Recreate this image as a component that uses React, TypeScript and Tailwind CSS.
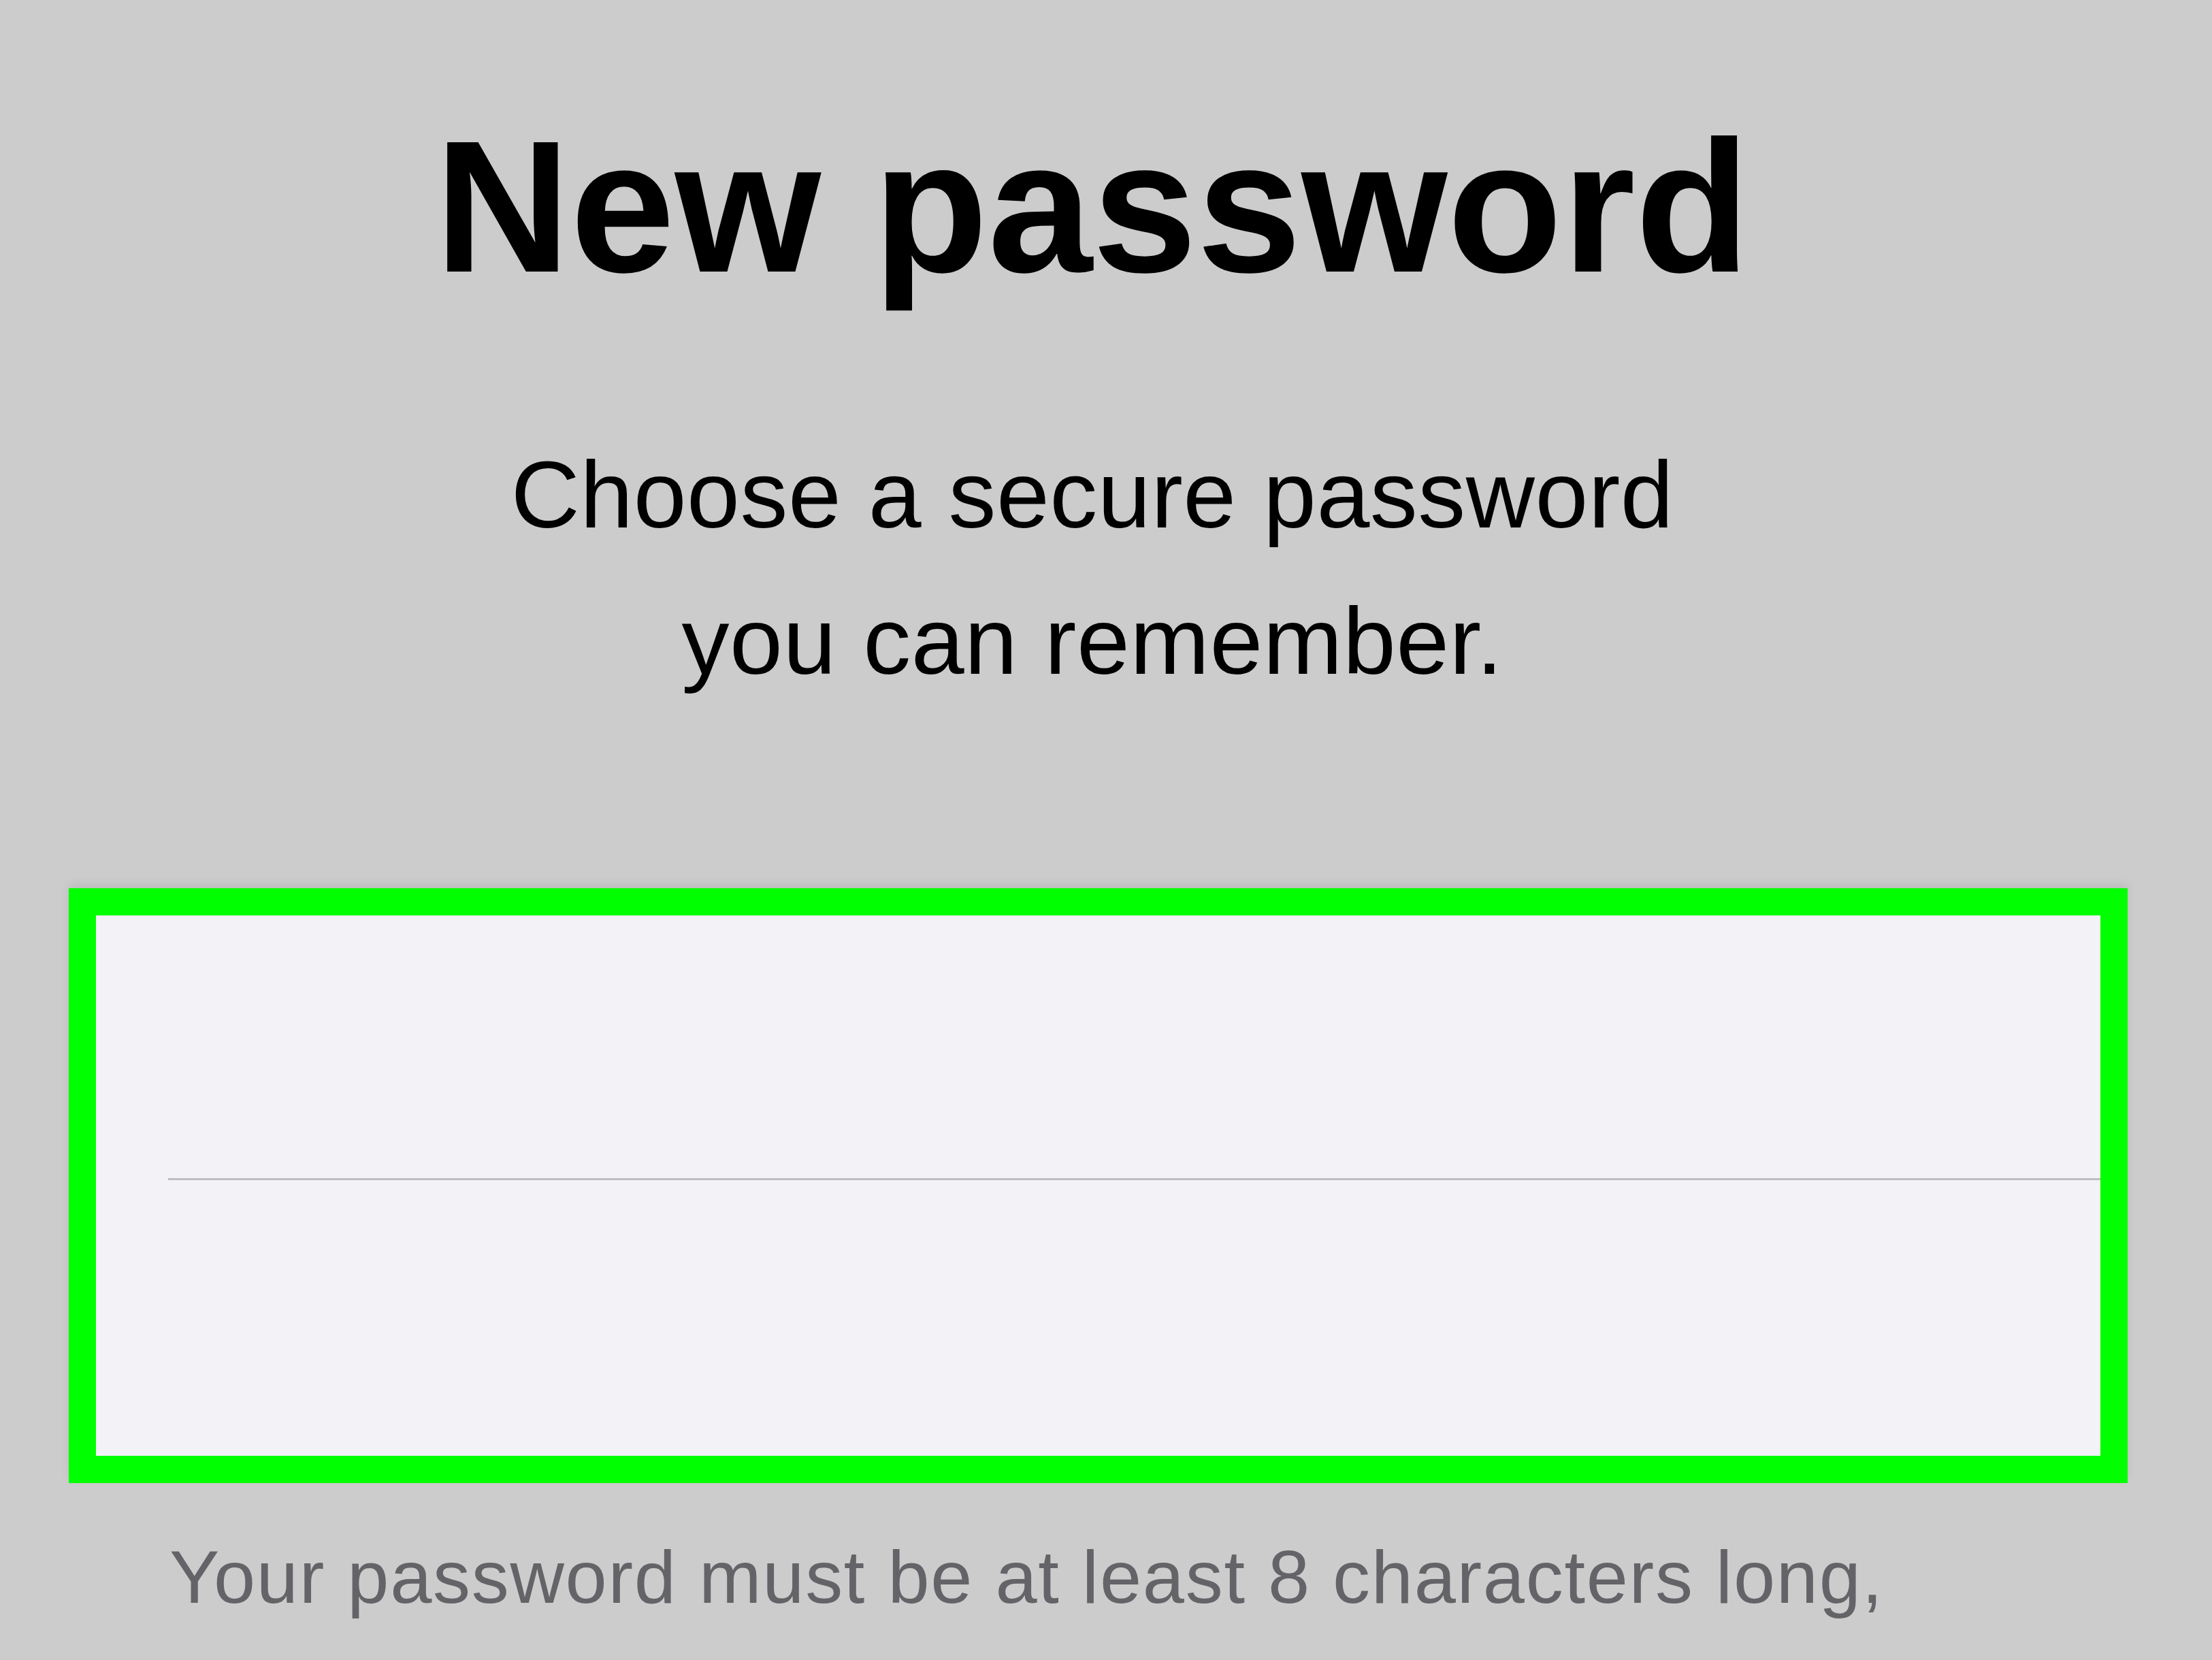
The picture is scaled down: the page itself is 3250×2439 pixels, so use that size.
const font = { fontFamily: '"Liberation Sans", Arial, sans-serif' };

function Header() {
	return (
		<header className="flex flex-col items-center pr-[40px] pt-[165px] text-black">
			<h1 className="text-[276px] font-bold leading-none">New password</h1>
			<p className="mt-[178px] text-center text-[140px] leading-[215px] tracking-[0.5px]">
				Choose a secure password
				<br />
				you can remember.
			</p>
		</header>
	);
}

function PasswordCard() {
	return (
		<section className="mt-[256px] ml-[101px] mr-[124px] border-[40px] border-[#00ff00] shadow-[0_-6px_12px_rgba(0,0,0,0.08)]">
			<div className="flex h-[794px] flex-col bg-[#f2f2f7]">
				<div className="h-[386px]" />
				<div className="ml-[106px] h-[3px] bg-[#bdbdc2]" />
				<div className="flex-1" />
			</div>
		</section>
	);
}

export default function App() {
	return (
		<div
			className="flex h-[2439px] w-[3250px] flex-col overflow-hidden bg-[#cccccc]"
			style={font}
		>
			<Header />
			<PasswordCard />
			<p className="mt-[83px] pl-[249px] text-[110px] leading-none tracking-[1.7px] text-[#646468]">
				Your password must be at least 8 characters long,
			</p>
		</div>
	);
}
